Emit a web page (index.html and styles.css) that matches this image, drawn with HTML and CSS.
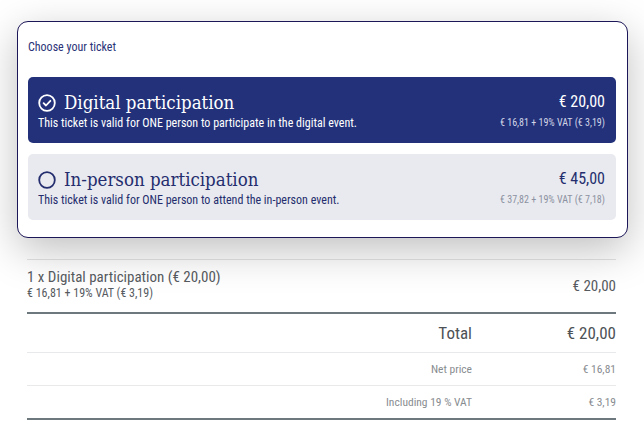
FILE: index.html
```html
<!DOCTYPE html>
<html lang="en">
<head>
<meta charset="utf-8">
<link rel="stylesheet" href="styles.css">
</head>
<body>
<div class="modal">
  <div class="modal-title">Choose your ticket</div>
  <div class="options">
    <div class="option selected">
      <div class="opt-main">
        <div class="opt-head">
          <svg class="radio" viewBox="0 0 18 18" width="18" height="18"><circle cx="9" cy="9" r="7.8" fill="none" stroke="currentColor" stroke-width="1.8"/><path d="M5.6 9.2 L8 11.5 L12.4 6.8" fill="none" stroke="currentColor" stroke-width="1.8" stroke-linecap="round" stroke-linejoin="round"/></svg>
          <span class="opt-name">Digital participation</span>
        </div>
        <div class="opt-desc">This ticket is valid for ONE person to participate in the digital event.</div>
      </div>
      <div class="opt-price">
        <div class="price">€ 20,00</div>
        <div class="price-sub">€ 16,81 + 19% VAT (€ 3,19)</div>
      </div>
    </div>
    <div class="option">
      <div class="opt-main">
        <div class="opt-head">
          <svg class="radio" viewBox="0 0 18 18" width="18" height="18"><circle cx="9" cy="9" r="7.8" fill="none" stroke="currentColor" stroke-width="1.8"/></svg>
          <span class="opt-name">In-person participation</span>
        </div>
        <div class="opt-desc">This ticket is valid for ONE person to attend the in-person event.</div>
      </div>
      <div class="opt-price">
        <div class="price">€ 45,00</div>
        <div class="price-sub">€ 37,82 + 19% VAT (€ 7,18)</div>
      </div>
    </div>
  </div>
</div>

<div class="summary">
  <div class="item-row">
    <div class="item-info">
      <div class="item-name">1 x Digital participation (€ 20,00)</div>
      <div class="item-sub">€ 16,81 + 19% VAT (€ 3,19)</div>
    </div>
    <div class="item-price">€ 20,00</div>
  </div>
  <div class="sum-row total">
    <div class="sum-label">Total</div>
    <div class="sum-value">€ 20,00</div>
  </div>
  <div class="sum-row small">
    <div class="sum-label">Net price</div>
    <div class="sum-value">€ 16,81</div>
  </div>
  <div class="sum-row small last">
    <div class="sum-label">Including 19 % VAT</div>
    <div class="sum-value">€ 3,19</div>
  </div>
</div>
</body>
</html>
```
FILE: styles.css
```css
html, body {
  margin: 0;
  padding: 0;
  background: #ffffff;
}
body {
  width: 644px;
  height: 425px;
  overflow: hidden;
  font-family: "Roboto Condensed", "Liberation Sans Narrow", "Roboto", sans-serif;
}
.modal {
  position: relative;
  z-index: 2;
  margin: 21px 16px 0 17px;
  box-sizing: border-box;
  height: 217px;
  padding: 18px 11px 0 10px;
  background: #fff;
  border: 1px solid #1c1758;
  border-radius: 11px;
  box-shadow: 0 12px 42px rgba(0, 0, 0, 0.25);
}
.modal-title {
  font-size: 12px;
  line-height: 14px;
  color: #2b3478;
  height: 37px;
}
.options {
  display: flex;
  flex-direction: column;
  gap: 11px;
}
.option {
  display: flex;
  justify-content: space-between;
  align-items: flex-start;
  height: 66px;
  box-sizing: border-box;
  padding: 14px 11px 0 10px;
  border-radius: 5px;
  background: #e9eaef;
  color: #242e6e;
}
.option.selected {
  background: #22317a;
  color: #ffffff;
}
.opt-head {
  display: flex;
  align-items: center;
  gap: 8px;
  height: 23px;
}
.radio {
  display: block;
  flex: none;
}
.opt-name {
  font-family: "Roboto Slab", "DejaVu Serif Condensed", "DejaVu Serif", serif;
  font-size: 18.5px;
  line-height: 23px;
}
.opt-desc {
  font-size: 12px;
  line-height: 14px;
  margin-top: 2px;
}
.opt-price {
  text-align: right;
}
.price {
  font-size: 16px;
  line-height: 20px;
  margin-top: 1px;
}
.price-sub {
  font-size: 10px;
  line-height: 14px;
  margin-top: 4px;
  color: #8c91a1;
}
.option.selected .price-sub {
  color: #d2d5e6;
}
.summary {
  margin: 21px 28px 0 27px;
  border-top: 1px solid #e2e4e6;
}
.item-row {
  display: flex;
  justify-content: space-between;
  align-items: center;
  height: 52px;
  border-bottom: 2px solid #6c787e;
  color: #575b5f;
}
.item-info {
  margin-top: -3px;
}
.item-name {
  font-size: 15px;
  line-height: 18px;
}
.item-sub {
  font-size: 12px;
  line-height: 15px;
}
.item-price {
  font-size: 15px;
}
.sum-row {
  display: grid;
  grid-template-columns: 1fr 144px;
  align-items: center;
  border-bottom: 1px solid #e8e9eb;
  text-align: right;
}
.sum-row.total {
  height: 38px;
  font-size: 17px;
  color: #4d5256;
}
.sum-row.small {
  height: 32px;
  font-size: 11.5px;
  color: #888c90;
}
.sum-row.last {
  border-bottom: 2px solid #6c787e;
}
```
